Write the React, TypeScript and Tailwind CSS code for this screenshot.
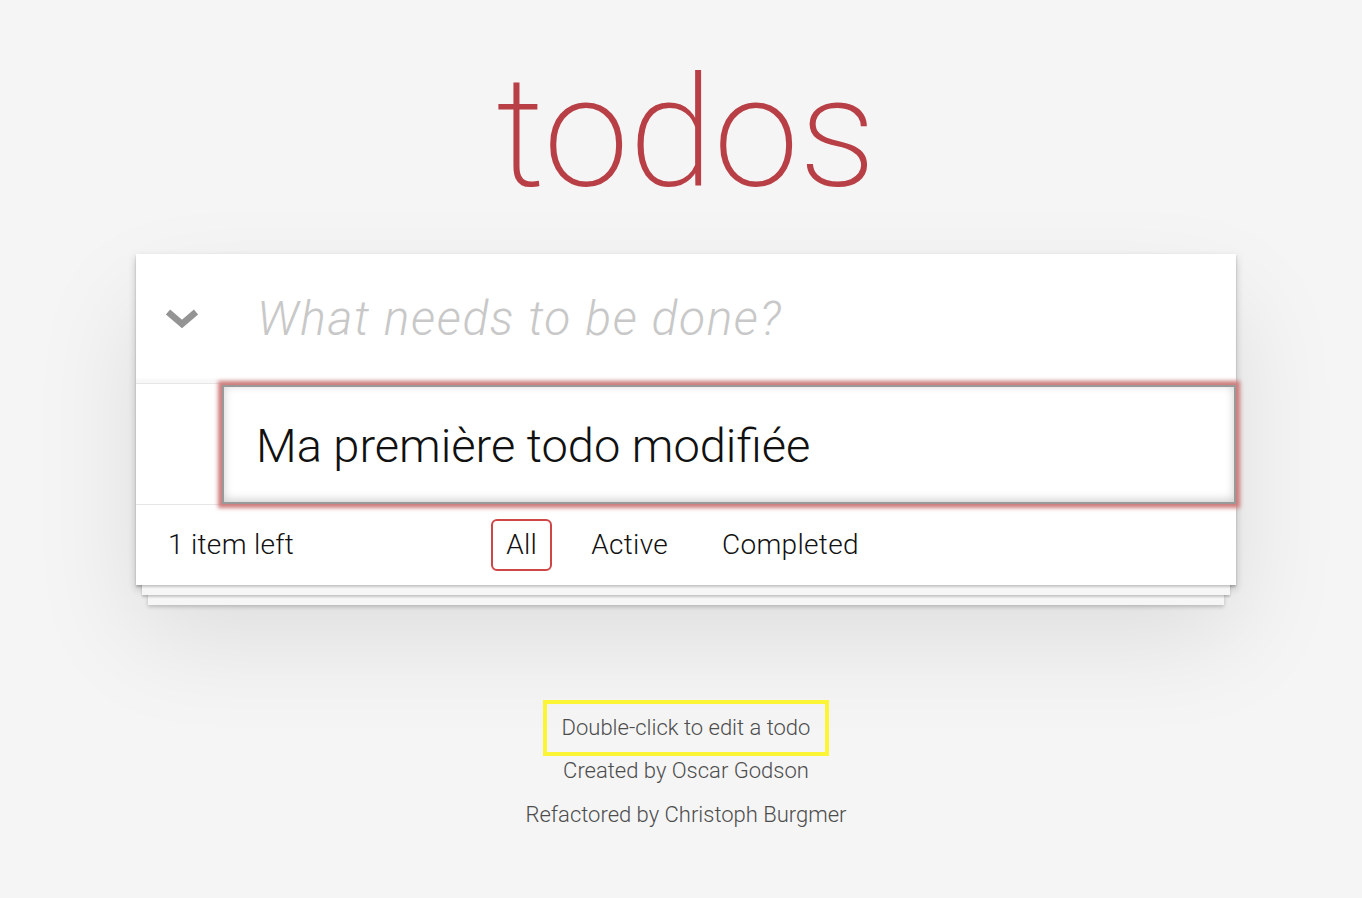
import React from "react";

const filters = ["All", "Active", "Completed"];

export default function App() {
  return (
    <div className="min-h-screen bg-[#f5f5f5] pl-[10px] pt-[54px] font-['Roboto','Inter',sans-serif] font-light text-[#111]">
      <div className="mx-auto w-[1100px]">
        <h1 className="text-center text-[154px] leading-[160px] font-extralight text-[#b83f45]">todos</h1>

        {/* Card */}
        <section className="mt-[40px] bg-white shadow-[0_2px_2px_rgba(0,0,0,0.2),0_16px_0_-6px_#f6f6f6,0_18px_2px_-6px_rgba(0,0,0,0.2),0_32px_0_-12px_#f6f6f6,0_34px_4px_-12px_rgba(0,0,0,0.2),0_4px_8px_0_rgba(0,0,0,0.2),0_50px_100px_0_rgba(0,0,0,0.1)]">
          {/* New todo */}
          <header className="flex h-[129px] items-center shadow-[inset_0_-4px_2px_rgba(0,0,0,0.03)]">
            <div className="flex w-[121px] shrink-0 pl-[29px]">
              <svg width="34" height="24" viewBox="0 0 34 24" fill="none">
                <path d="M3 5 L17 17 L31 5" stroke="#949494" strokeWidth="6.5" strokeLinejoin="miter" />
              </svg>
            </div>
            <input
              placeholder="What needs to be done?"
              className="w-full bg-transparent pr-[32px] text-[48px] font-light outline-none placeholder:italic placeholder:tracking-[1.6px] placeholder:text-[#c8c8c8]"
            />
          </header>

          {/* List */}
          <ul className="border-t border-[#e6e6e6]">
            <li className="relative z-10 pl-[86px] pt-[1px]">
              <div className="flex h-[119px] items-center border-2 border-[#999] bg-white px-[32px] pt-[4px] text-[47px] font-light text-[#111] shadow-[0_0_4px_4px_#cf7d7d,inset_0_-2px_10px_0_rgba(0,0,0,0.2)]">
                Ma première todo modifiée
              </div>
            </li>
          </ul>

          {/* Footer */}
          <footer className="grid h-[81px] grid-cols-[1fr_auto_1fr] items-center border-t border-[#e6e6e6] px-[32px] text-[28px] tracking-[0.3px]">
            <span>1 item left</span>
            <ul className="mr-[7px] flex gap-[24px]">
              {filters.map((f, i) => (
                <li key={f}>
                  <a
                    className={
                      "block rounded-[6px] border-2 px-[13px] py-[6px] leading-[36px] " +
                      (i === 0 ? "border-[#ce4646]" : "border-transparent")
                    }
                  >
                    {f}
                  </a>
                </li>
              ))}
            </ul>
            <span />
          </footer>
        </section>

        {/* Info */}
        <div className="mt-[115px] flex flex-col items-center text-[22px] leading-[22px] text-[#4d4d4d]">
          <p className="border-4 border-[#fcf536] px-[15px] py-[13px]">Double-click to edit a todo</p>
          <p className="mt-[4px]">Created by Oscar Godson</p>
          <p className="mt-[22px]">Refactored by Christoph Burgmer</p>
        </div>
      </div>
    </div>
  );
}
